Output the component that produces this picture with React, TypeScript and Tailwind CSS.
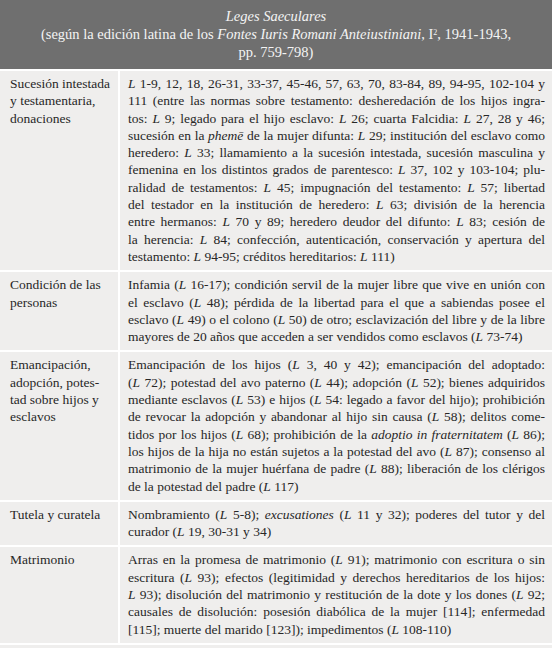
import type { ReactNode } from 'react'

const L = () => <i>L</i>

type Row = { topic: string[]; lines: ReactNode[] }

const rows: Row[] = [
  {
    topic: ['Sucesión intestada', 'y testamentaria,', 'donaciones'],
    lines: [
      <><L /> 1-9, 12, 18, 26-31, 33-37, 45-46, 57, 63, 70, 83-84, 89, 94-95, 102-104 y</>,
      <>111 (entre las normas sobre testamento: desheredación de los hijos ingra-</>,
      <>tos: <L /> 9; legado para el hijo esclavo: <L /> 26; cuarta Falcidia: <L /> 27, 28 y 46;</>,
      <>sucesión en la <i>phemē</i> de la mujer difunta: <L /> 29; institución del esclavo como</>,
      <>heredero: <L /> 33; llamamiento a la sucesión intestada, sucesión masculina y</>,
      <>femenina en los distintos grados de parentesco: <L /> 37, 102 y 103-104; plu-</>,
      <>ralidad de testamentos: <L /> 45; impugnación del testamento: <L /> 57; libertad</>,
      <>del testador en la institución de heredero: <L /> 63; división de la herencia</>,
      <>entre hermanos: <L /> 70 y 89; heredero deudor del difunto: <L /> 83; cesión de</>,
      <>la herencia: <L /> 84; confección, autenticación, conservación y apertura del</>,
      <>testamento: <L /> 94-95; créditos hereditarios: <L /> 111)</>,
    ],
  },
  {
    topic: ['Condición de las', 'personas'],
    lines: [
      <>Infamia (<L /> 16-17); condición servil de la mujer libre que vive en unión con</>,
      <>el esclavo (<L /> 48); pérdida de la libertad para el que a sabiendas posee el</>,
      <>esclavo (<L /> 49) o el colono (<L /> 50) de otro; esclavización del libre y de la libre</>,
      <>mayores de 20 años que acceden a ser vendidos como esclavos (<L /> 73-74)</>,
    ],
  },
  {
    topic: ['Emancipación,', 'adopción, potes-', 'tad sobre hijos y', 'esclavos'],
    lines: [
      <>Emancipación de los hijos (<L /> 3, 40 y 42); emancipación del adoptado:</>,
      <>(<L /> 72); potestad del avo paterno (<L /> 44); adopción (<L /> 52); bienes adquiridos</>,
      <>mediante esclavos (<L /> 53) e hijos (<L /> 54: legado a favor del hijo); prohibición</>,
      <>de revocar la adopción y abandonar al hijo sin causa (<L /> 58); delitos come-</>,
      <>tidos por los hijos (<L /> 68); prohibición de la <i>adoptio in fraternitatem</i> (<L /> 86);</>,
      <>los hijos de la hija no están sujetos a la potestad del avo (<L /> 87); consenso al</>,
      <>matrimonio de la mujer huérfana de padre (<L /> 88); liberación de los clérigos</>,
      <>de la potestad del padre (<L /> 117)</>,
    ],
  },
  {
    topic: ['Tutela y curatela'],
    lines: [
      <>Nombramiento (<L /> 5-8); <i>excusationes</i> (<L /> 11 y 32); poderes del tutor y del</>,
      <>curador (<L /> 19, 30-31 y 34)</>,
    ],
  },
  {
    topic: ['Matrimonio'],
    lines: [
      <>Arras en la promesa de matrimonio (<L /> 91); matrimonio con escritura o sin</>,
      <>escritura (<L /> 93); efectos (legitimidad y derechos hereditarios de los hijos:</>,
      <><L /> 93); disolución del matrimonio y restitución de la dote y los dones (<L /> 92;</>,
      <>causales de disolución: posesión diabólica de la mujer [114]; enfermedad</>,
      <>[115]; muerte del marido [123]); impedimentos (<L /> 108-110)</>,
    ],
  },
]

function Justified({ lines }: { lines: ReactNode[] }) {
  return (
    <>
      {lines.map((line, i) => (
        <div
          key={i}
          className={
            i < lines.length - 1
              ? 'whitespace-nowrap text-justify [text-align-last:justify]'
              : 'whitespace-nowrap text-left'
          }
        >
          {line}
        </div>
      ))}
    </>
  )
}

export default function App() {
  return (
    <div className="h-[648px] w-[552px] overflow-hidden bg-[#efeeed] text-[#272727] [font-family:Liberation_Serif,Times_New_Roman,serif]">
      <header className="bg-[#6f6f6f] px-4 pb-[8px] pt-[7px] text-center text-[14.5px] leading-[18px] text-[#f4f4f4]">
        <div>
          <i>Leges Saeculares</i>
        </div>
        <div>
          (según la edición latina de los <i>Fontes Iuris Romani Anteiustiniani</i>, I
          <sup className="text-[8px]">2</sup>, 1941-1943,
        </div>
        <div>pp. 759-798)</div>
      </header>

      <div className="border-t-2 border-white text-[13.5px] leading-[17.3px]">
        {rows.map((row, i) => (
          <div key={i} className="flex border-b-2 border-white">
            <div className="w-[118px] shrink-0 pb-[5px] pl-[10px] pt-[4px]">
              {row.topic.map((t, j) => (
                <div key={j} className="whitespace-nowrap">
                  {t}
                </div>
              ))}
            </div>
            <div className="min-w-0 flex-1 border-l-2 border-white pb-[5px] pl-[8px] pr-[7px] pt-[4px]">
              <Justified lines={row.lines} />
            </div>
          </div>
        ))}
      </div>
    </div>
  )
}
